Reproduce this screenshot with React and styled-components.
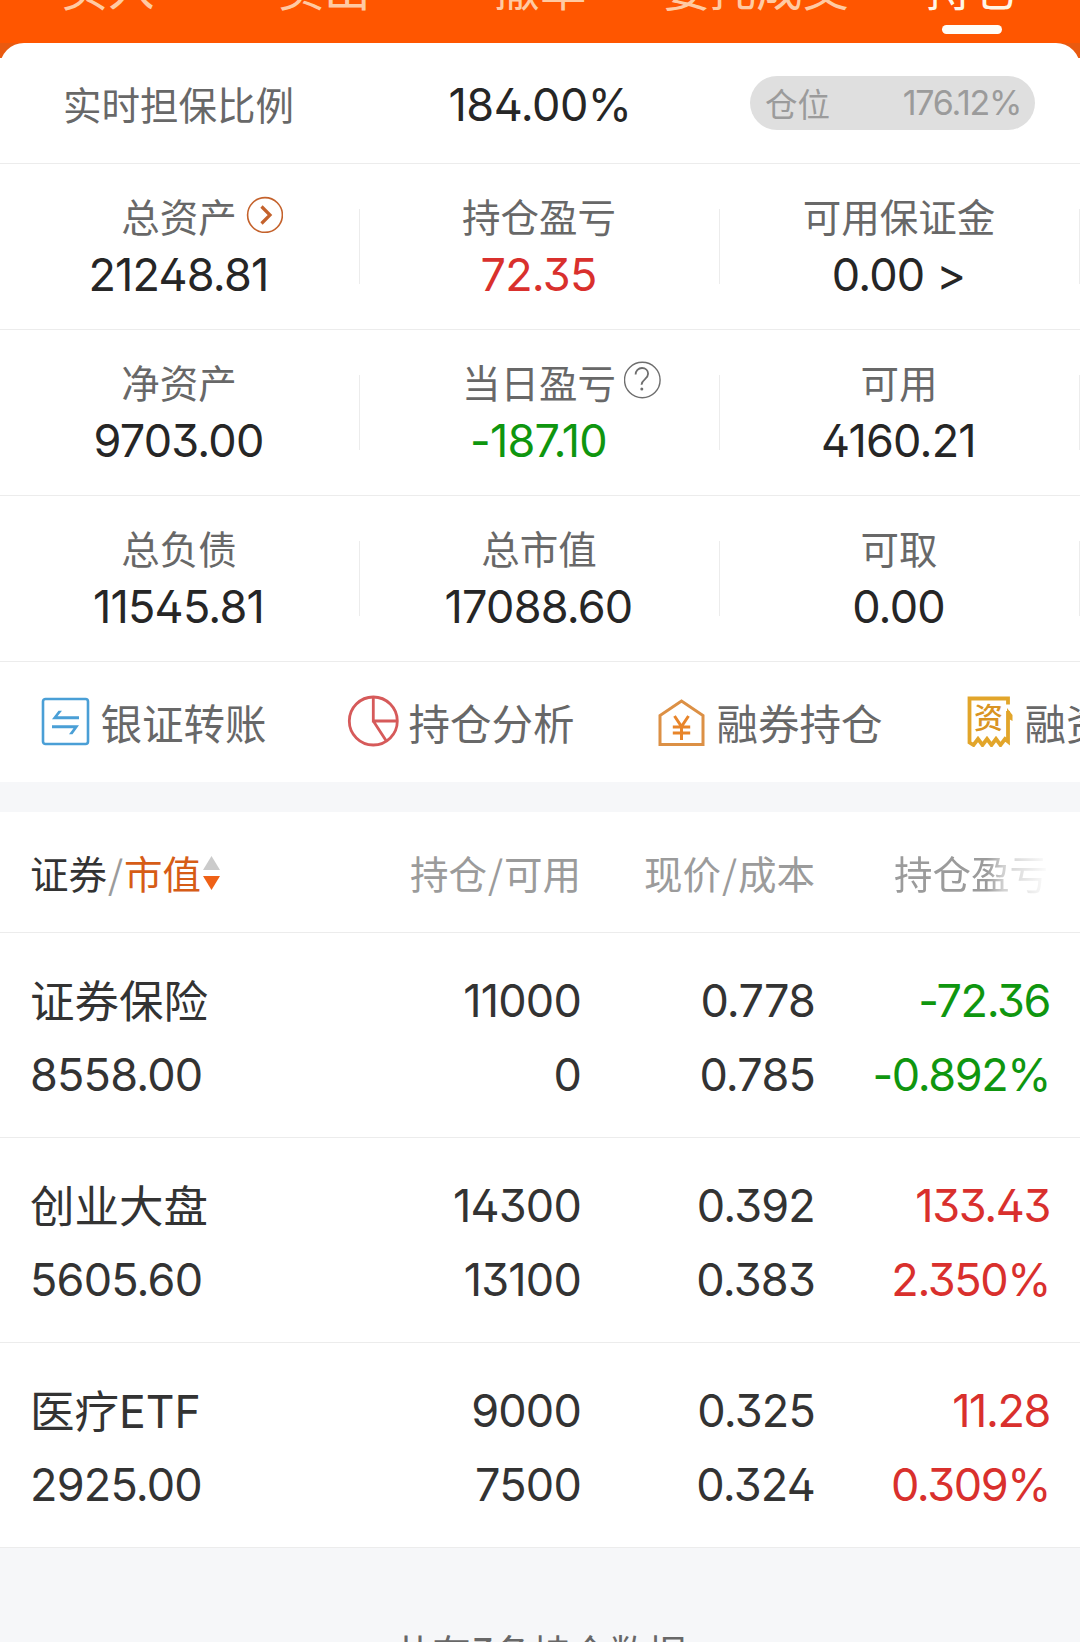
import styled, { createGlobalStyle, css } from "styled-components";

const cjk = `"Noto Sans CJK SC", sans-serif`;
const latin = `Inter, "Noto Sans CJK SC", sans-serif`;

const colors = {
  brand: "#ff5600",
  label: "#686868",
  text: "#262626",
  muted: "#9b9b9b",
  line: "#ececec",
  page: "#f6f7f9",
  up: "#d9302d",
  down: "#0f960f",
};

const GlobalStyle = createGlobalStyle`
  * {
    box-sizing: border-box;
  }

  body {
    margin: 0;
    background: ${colors.page};
    overflow: hidden;
  }
`;

const Screen = styled.div`
  width: 1080px;
  height: 1642px;
  overflow: hidden;
  background: ${colors.page};
  font-family: ${cjk};
`;

const digits = css`
  font-family: ${latin};
  font-feature-settings: "cv02", "cv09";
  letter-spacing: -0.8px;
`;

const Tabs = styled.nav`
  display: flex;
  align-items: flex-end;
  height: 43px;
  background: ${colors.brand};
`;

const Tab = styled.div`
  flex: 1;
  display: flex;
  flex-direction: column;
  align-items: center;
  height: 81px;
  color: ${(props) => (props.$active ? "#fff6e6" : "#ffcaa3")};
  font-size: 46.5px;
  line-height: 48px;
  white-space: nowrap;

  &::after {
    content: "";
    width: 60px;
    height: 9px;
    margin-top: 15px;
    border-radius: 5px;
    background: ${(props) => (props.$active ? "#fffdf8" : "transparent")};
  }
`;

const Backdrop = styled.div`
  background: linear-gradient(#e95a10 15px, #fff 15px);
`;

const Summary = styled.section`
  height: 739px;
  border-radius: 24px 24px 0 0;
  background: #fff;
`;

const RatioRow = styled.div`
  display: grid;
  grid-template-columns: 360px 360px 360px;
  align-items: center;
  height: 121px;
  border-bottom: 1px solid ${colors.line};
`;

const RatioLabel = styled.div`
  padding-left: 63px;
  color: ${colors.label};
  font-size: 38.5px;
  line-height: 50px;
`;

const RatioValue = styled.div`
  ${digits}
  padding-top: 4px;
  color: ${colors.text};
  font-size: 45px;
  line-height: 50px;
  letter-spacing: -0.5px;
  text-align: center;
`;

const Pill = styled.div`
  display: flex;
  align-items: center;
  justify-content: space-between;
  width: 285px;
  height: 54px;
  margin-left: 30px;
  padding: 0 14px 0 15px;
  border-radius: 27px;
  background: #dfdfdf;
  color: ${colors.muted};
  font-size: 32.5px;
  line-height: 52px;
`;

const PillValue = styled.span`
  ${digits}
  font-size: 34px;
  letter-spacing: -1.3px;
`;

const StatRow = styled.div`
  display: flex;
  align-items: center;
  height: 166px;
  border-bottom: 1px solid ${colors.line};
`;

const Stat = styled.div`
  display: flex;
  flex-direction: column;
  align-items: center;
  justify-content: center;
  width: 360px;
  height: 75px;
  padding: 4px 1px 0 0;
  border-right: 1px solid ${colors.line};
`;

const StatLabel = styled.div`
  position: relative;
  color: ${colors.label};
  font-size: 38.5px;
  line-height: 50px;
`;

/* hangs off the end of the label so that the label stays centered */
const LabelBadge = styled.span`
  position: absolute;
  top: 5px;
  left: 100%;
  display: flex;
  margin-left: 8px;
`;

const StatValue = styled.div`
  ${digits}
  padding: 2px 1px 0 0;
  color: ${(props) => colors[props.$tone] || colors.text};
  font-size: 45px;
  line-height: 66px;
  white-space: pre;
`;

const Actions = styled.div`
  display: flex;
  height: 120px;
  overflow: hidden;
`;

const Action = styled.div`
  display: flex;
  flex: 0 0 308px;
  align-items: center;
  gap: 10px;
  padding-left: 38.5px;
  color: ${colors.label};
  font-size: 41.5px;
  line-height: 60px;
  white-space: nowrap;

  svg {
    margin-top: -2px;
  }
`;

const Holdings = styled.section`
  margin-top: 30px;
  background: #fff;
`;

const columns = css`
  display: grid;
  grid-template-columns: 301px 250px 234px 235px;
  padding: 0 30px;
`;

const HeadRow = styled.div`
  ${columns}
  align-items: center;
  height: 121px;
  border-bottom: 1px solid ${colors.line};
  color: ${colors.muted};
  font-size: 38.5px;
  line-height: 50px;
`;

const HeadCell = styled.div`
  display: flex;
  align-items: center;
  justify-content: ${(props) => (props.$start ? "flex-start" : "flex-end")};
  white-space: pre;

  svg {
    margin: 2px 0 0 2px;
  }
`;

const FadingCell = styled(HeadCell)`
  padding-right: 2px;
  mask-image: linear-gradient(to right, #000 172px, #0007 188px, transparent 236px);
`;

const Slash = styled.span`
  margin: 0 1px;
`;

const Dark = styled.span`
  color: #333;
`;

const Sorted = styled.span`
  color: #d65c16;
`;

const Row = styled.div`
  ${columns}
  align-content: center;
  row-gap: 9px;
  height: 205px;
  padding-top: 5px;
  border-bottom: 1px solid ${colors.line};
`;

const Name = styled.div`
  padding-top: 1px;
  color: #333;
  font-family: ${latin};
  font-size: 44.5px;
  line-height: 64px;
`;

const Cell = styled.div`
  ${digits}
  color: ${(props) => colors[props.$tone] || "#333"};
  font-size: 45px;
  line-height: 64px;
  letter-spacing: ${(props) => (props.$tone ? "-1.4px" : "-0.8px")};
  text-align: ${(props) => (props.$start ? "left" : "right")};
`;

const Footer = styled.footer`
  padding-top: 78px;
  color: ${colors.label};
  font-size: 38.5px;
  line-height: 50px;
  text-align: center;
`;

const Count = styled.span`
  ${digits}
  line-height: 1;
  vertical-align: 2px;
`;

function ArrowBadge() {
  return (
    <svg width="38" height="38" viewBox="0 0 38 38" fill="none">
      <circle cx="20" cy="20" r="17.4" stroke="#c4622c" strokeWidth="1.6" />
      <path d="M16.5 11.5l8.5 8.5-8.5 8.5" stroke="#c4622c" strokeWidth="3.2" />
    </svg>
  );
}

function HelpBadge() {
  return (
    <svg width="38" height="38" viewBox="1 -1 38 38" fill="none">
      <circle cx="19.3" cy="18" r="17.8" stroke="#6e6e6e" strokeWidth="1.4" />
      <path
        d="M12.6 12.6c0-3.8 2.8-6.6 6.4-6.6 3.5 0 6.1 2.4 6.1 5.7 0 2.6-1.3 4-3.3 5.7-2.3 1.9-3.3 2.9-3.3 5.4"
        stroke="#6e6e6e"
        strokeWidth="1.8"
      />
      <circle cx="18.8" cy="27" r="1.5" fill="#6e6e6e" />
    </svg>
  );
}

function TransferIcon() {
  return (
    <svg width="52" height="52" viewBox="0 0 52 52" fill="none">
      <rect x="4" y="4" width="45" height="45" rx="2.5" stroke="#4a9fd6" strokeWidth="2.6" />
      <path d="M40 24.2H13l6.5-8.5H23l-4.500 5.500h21.500z" fill="#4a9fd6" />
      <path d="M13 30.200h27l-6.500 9H30l4.500-6H13z" fill="#4a9fd6" />
    </svg>
  );
}

function PieIcon() {
  return (
    <svg width="52" height="52" viewBox="0 0 52 52" fill="none">
      <circle cx="26.3" cy="26" r="24" stroke="#d65a5a" strokeWidth="2.8" />
      <path d="M26.3 2v24h24M26.3 26l13 20" stroke="#d65a5a" strokeWidth="2.8" />
    </svg>
  );
}

function HouseIcon() {
  return (
    <svg width="52" height="52" viewBox="0 0 52 52" fill="none">
      <path d="M5 49.500V20.500L26.500 6 48 20.500V49.500z" stroke="#dc9045" strokeWidth="3" />
      <path
        d="M19.500 21l7 10.500 7-10.500M17.800 32h17.400M17.800 38h17.400M26.500 31v14"
        stroke="#e8852a"
        strokeWidth="3"
      />
    </svg>
  );
}

/* torn slip: zigzag bottom edge and a folded notch on the right */
function ReceiptIcon() {
  return (
    <svg width="52" height="52" viewBox="0 0 52 52" fill="none">
      <path
        d="M45 9.500V3.500H6.500v44l4 2.500 4.500-6 4.500 6 4.500-6 4.500 6 4.500-6 4.500 6 4.500-6 3 2.500V16"
        stroke="#e2a52a"
        strokeWidth="3.800"
      />
      <path d="M44 13l5.500 7v6l-5.500-3z" fill="#e2a52a" />
      <text
        x="25.500"
        y="34"
        textAnchor="middle"
        fontFamily="Noto Sans CJK SC, sans-serif"
        fontSize="29"
        fontWeight="500"
        fill="#d99422"
      >
        资
      </text>
    </svg>
  );
}

function SortArrows() {
  return (
    <svg width="17" height="36" viewBox="0 0 17 36">
      <path d="M8.5 1l8.500 14H0z" fill="#cbcbcb" />
      <path d="M8.500 35l8.500-14H0z" fill="#ef6116" />
    </svg>
  );
}

const tabs = ["买入", "卖出", "撤单", "委托成交", "持仓"];

const stats = [
  [
    { label: "总资产", value: "21248.81", badge: <ArrowBadge /> },
    { label: "持仓盈亏", value: "72.35", tone: "up" },
    { label: "可用保证金", value: "0.00 >" },
  ],
  [
    { label: "净资产", value: "9703.00" },
    { label: "当日盈亏", value: "-187.10", tone: "down", badge: <HelpBadge /> },
    { label: "可用", value: "4160.21" },
  ],
  [
    { label: "总负债", value: "11545.81" },
    { label: "总市值", value: "17088.60" },
    { label: "可取", value: "0.00" },
  ],
];

const actions = [
  { label: "银证转账", icon: <TransferIcon /> },
  { label: "持仓分析", icon: <PieIcon /> },
  { label: "融券持仓", icon: <HouseIcon /> },
  { label: "融资持仓", icon: <ReceiptIcon /> },
];

const holdings = [
  {
    name: "证券保险",
    value: "8558.00",
    amount: ["11000", "0"],
    price: ["0.778", "0.785"],
    profit: ["-72.36", "-0.892%"],
    tone: "down",
  },
  {
    name: "创业大盘",
    value: "5605.60",
    amount: ["14300", "13100"],
    price: ["0.392", "0.383"],
    profit: ["133.43", "2.350%"],
    tone: "up",
  },
  {
    name: "医疗ETF",
    value: "2925.00",
    amount: ["9000", "7500"],
    price: ["0.325", "0.324"],
    profit: ["11.28", "0.309%"],
    tone: "up",
  },
];

function Holding({ data }) {
  return (
    <Row>
      <Name>{data.name}</Name>
      <Cell>{data.amount[0]}</Cell>
      <Cell>{data.price[0]}</Cell>
      <Cell $tone={data.tone}>{data.profit[0]}</Cell>
      <Cell $start>{data.value}</Cell>
      <Cell>{data.amount[1]}</Cell>
      <Cell>{data.price[1]}</Cell>
      <Cell $tone={data.tone}>{data.profit[1]}</Cell>
    </Row>
  );
}

export default function App() {
  return (
    <Screen>
      <GlobalStyle />
      <Tabs>
        {tabs.map((tab) => (
          <Tab key={tab} $active={tab === "持仓"}>
            {tab}
          </Tab>
        ))}
      </Tabs>
      <Backdrop>
        <Summary>
          <RatioRow>
            <RatioLabel>实时担保比例</RatioLabel>
            <RatioValue>184.00%</RatioValue>
            <Pill>
              仓位
              <PillValue>176.12%</PillValue>
            </Pill>
          </RatioRow>
          {stats.map((row, i) => (
            <StatRow key={i}>
              {row.map((stat) => (
                <Stat key={stat.label}>
                  <StatLabel>
                    {stat.label}
                    {stat.badge && <LabelBadge>{stat.badge}</LabelBadge>}
                  </StatLabel>
                  <StatValue $tone={stat.tone}>{stat.value}</StatValue>
                </Stat>
              ))}
            </StatRow>
          ))}
          <Actions>
            {actions.map((action) => (
              <Action key={action.label}>
                {action.icon}
                {action.label}
              </Action>
            ))}
          </Actions>
        </Summary>
      </Backdrop>
      <Holdings>
        <HeadRow>
          <HeadCell $start>
            <Dark>证券</Dark>
            <Slash>/</Slash>
            <Sorted>市值</Sorted>
            <SortArrows />
          </HeadCell>
          <HeadCell>
            持仓<Slash>/</Slash>可用
          </HeadCell>
          <HeadCell>
            现价<Slash>/</Slash>成本
          </HeadCell>
          <FadingCell>持仓盈亏</FadingCell>
        </HeadRow>
        {holdings.map((item) => (
          <Holding key={item.name} data={item} />
        ))}
      </Holdings>
      <Footer>
        共有<Count>3</Count>条持仓数据
      </Footer>
    </Screen>
  );
}
